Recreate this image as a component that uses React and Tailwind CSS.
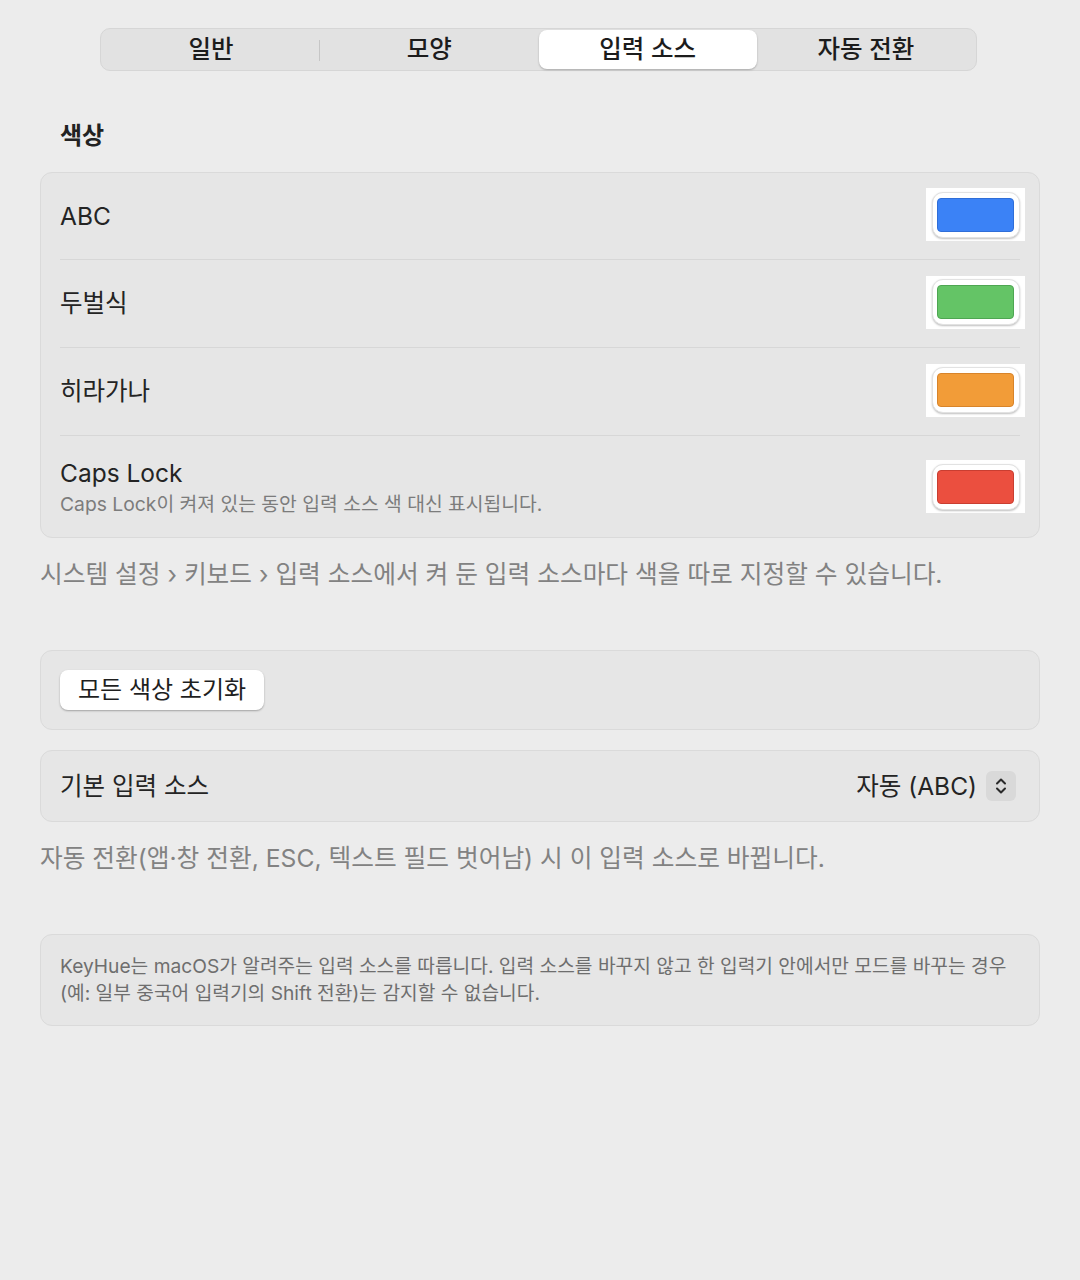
import React from "react";

const tabs = ["일반", "모양", "입력 소스", "자동 전환"];

const sources = [
  { name: "ABC", fill: "bg-[#3b82f6]", edge: "border-[#2f6ed8]", h: "h-[87px]" },
  { name: "두벌식", fill: "bg-[#64c466]", edge: "border-[#4ea652]", h: "h-[88px]" },
  { name: "히라가나", fill: "bg-[#f29c38]", edge: "border-[#d8842a]", h: "h-[88px]" },
];

const Swatch = ({ fill, edge, lift }) => (
  <div className={`w-[99px] h-[53px] bg-white flex items-center justify-center -mr-[5px] ${lift ? "-mt-[3px]" : ""}`}>
    <div className="w-[88px] h-[46px] rounded-[11px] bg-white border border-[#e2e2e2] shadow-[0_1px_2px_rgba(0,0,0,0.25)] flex items-center justify-center">
      <div className={`w-[77px] h-[34px] rounded-[4px] border ${fill} ${edge}`}></div>
    </div>
  </div>
);

const App = () => {
  return (
    <div className="w-[1080px] h-[1280px] bg-[#ececec] px-10 pt-7 font-[Inter,'Noto_Sans_CJK_KR',sans-serif] text-[#242424]">
      {/* tabs */}
      <div className="ml-[60px] mr-[63px] h-[43px] rounded-[10px] bg-[#e2e2e2] border border-[#d6d6d6] p-[1px] grid grid-cols-4">
        {tabs.map((t, i) => (
          <div key={t} className="relative flex items-center justify-center">
            {i === 2 ? (
              <div className="absolute inset-0 rounded-[8px] bg-white shadow-[0_1px_2px_rgba(0,0,0,0.25)]"></div>
            ) : null}
            <span className="relative text-[24.5px] leading-none font-medium text-[#1c1c1c]">{t}</span>
            {i === 0 ? (
              <div className="absolute right-0 top-[10px] h-[21px] w-px bg-[#c6c6c6]"></div>
            ) : null}
          </div>
        ))}
      </div>

      <div className="mt-[48px] mb-[20px] pl-5 text-[24px] leading-[33px] font-bold text-[#222]">색상</div>

      {/* color list */}
      <div className="rounded-[12px] border border-[#dadada] bg-[#e6e6e6] px-[19px]">
        {sources.map((s) => (
          <div key={s.name} className={`${s.h} border-b border-[#d7d7d7] flex items-center justify-between`}>
            <span className="text-[24.5px]">{s.name}</span>
            <Swatch fill={s.fill} edge={s.edge} lift />
          </div>
        ))}
        <div className="h-[101px] flex items-center justify-between">
          <div className="flex flex-col pt-[4px]">
            <span className="text-[24.5px] leading-[31px]">Caps Lock</span>
            <span className="text-[19.3px] leading-[31px] text-[#7c7c7c]">Caps Lock이 켜져 있는 동안 입력 소스 색 대신 표시됩니다.</span>
          </div>
          <Swatch fill="bg-[#eb4f3f]" edge="border-[#c93e31]" />
        </div>
      </div>

      <p className="mt-[20px] text-[24.7px] leading-[33px] text-[#828282]">
        시스템 설정 › 키보드 › 입력 소스에서 켜 둔 입력 소스마다 색을 따로 지정할 수 있습니다.
      </p>

      {/* reset */}
      <div className="mt-[59px] h-[80px] rounded-[12px] border border-[#dadada] bg-[#e6e6e6] px-[19px] flex items-center">
        <button className="h-[40px] px-[18px] rounded-[8px] bg-white shadow-[0_1px_2px_rgba(0,0,0,0.3)] text-[24px] leading-none text-[#1f1f1f]">
          모든 색상 초기화
        </button>
      </div>

      {/* default source */}
      <div className="mt-[20px] h-[72px] rounded-[12px] border border-[#dadada] bg-[#e6e6e6] pl-[19px] pr-[23px] flex items-center justify-between">
        <span className="text-[24.5px]">기본 입력 소스</span>
        <div className="flex items-center gap-[9px]">
          <span className="text-[24.5px]">자동 (ABC)</span>
          <div className="w-[30px] h-[30px] rounded-[6px] bg-[#d9d9d9] flex items-center justify-center">
            <svg width="14" height="20" viewBox="0 0 14 20" fill="none" stroke="#2a2a2a" strokeWidth="2" strokeLinecap="round" strokeLinejoin="round">
              <path d="M3 7.5 L7 3.5 L11 7.5" />
              <path d="M3 12.5 L7 16.5 L11 12.5" />
            </svg>
          </div>
        </div>
      </div>

      <p className="mt-[20px] text-[24.7px] leading-[33px] text-[#828282]">
        자동 전환(앱·창 전환, ESC, 텍스트 필드 벗어남) 시 이 입력 소스로 바뀝니다.
      </p>

      {/* note */}
      <div className="mt-[59px] rounded-[12px] border border-[#dadada] bg-[#e6e6e6] px-[19px] pt-[18px] pb-[18px] text-[19.2px] leading-[27px] text-[#6e6e6e]">
        KeyHue는 macOS가 알려주는 입력 소스를 따릅니다. 입력 소스를 바꾸지 않고 한 입력기 안에서만 모드를 바꾸는 경우
        <br />
        (예: 일부 중국어 입력기의 Shift 전환)는 감지할 수 없습니다.
      </div>
    </div>
  );
};

export default App;
